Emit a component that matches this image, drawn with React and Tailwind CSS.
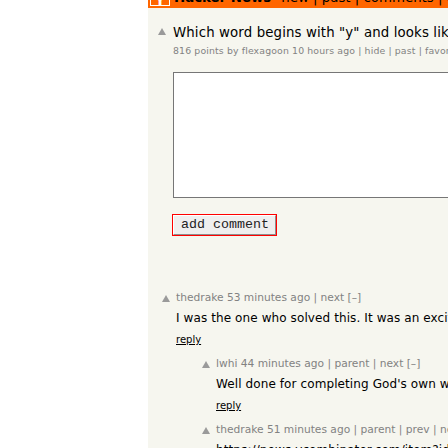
import React from "react";

const Arrow = ({ className }) => (
  <svg width="8" height="7" viewBox="0 0 8 7" className={className}>
    <polygon points="0,7 4,0 8,7" fill="#9a9a9a" />
  </svg>
);

const comments = [
  {
    pad: "pl-[14px]",
    head: "thedrake 53 minutes ago | next [–]",
    text: "I was the one who solved this. It was an exciting moment for me, I had been staring at it for a while.",
  },
  {
    pad: "pl-[54px]",
    head: "lwhi 44 minutes ago | parent | next [–]",
    text: "Well done for completing God's own word search.",
  },
  {
    pad: "pl-[54px]",
    head: "thedrake 51 minutes ago | parent | prev | next [–]",
    text: "https://news.ycombinator.com/item?id=40953458",
  },
];

const App = () => {
  return (
    <div className="w-[448px] h-[448px] overflow-hidden flex bg-white font-['DejaVu_Sans',Verdana,sans-serif]">
      <div className="w-[148px] shrink-0" />

      <div className="w-[1680px] shrink-0 bg-[#f6f6ef]">
        {/* Header (scrolled, only the bottom shows) */}
        <div className="h-[8px] bg-[#ff6600] overflow-hidden flex items-end pl-[2px] pb-[2px] whitespace-nowrap">
          <div className="w-[20px] h-[20px] border border-white flex items-end justify-center shrink-0">
            <span className="text-white font-bold text-[14px] leading-[10px]">Y</span>
          </div>
          <span className="ml-[4px] text-[13.33px] leading-[16px] font-bold text-black">Hacker News</span>
          <span className="ml-[10px] text-[13.33px] leading-[16px] text-black">
            new | past | comments | ask | show | jobs | submit
          </span>
        </div>

        {/* Story */}
        <div className="mt-[17px] flex pl-[10px] whitespace-nowrap">
          <Arrow className="mt-[3px] shrink-0" />
          <span className="ml-[7px] text-[13.33px] leading-[16px] tracking-[0.12px] text-black">
            Which word begins with "y" and looks like an axe in this picture?
          </span>
        </div>
        <div className="mt-[4px] pl-[25px] text-[9.33px] leading-[12px] tracking-[0.14px] text-[#828282] whitespace-nowrap">
          816 points by flexagoon 10 hours ago | hide | past | favorite | 318 comments
        </div>

        {/* Comment form */}
        <div className="mt-[15px] pl-[25px]">
          <textarea
            readOnly
            className="block w-[600px] h-[126px] bg-white border border-[#767676] resize-none outline-none"
          />
        </div>
        <div className="mt-[16px] pl-[24px]">
          <div className="w-[105px] h-[22px] border border-[#ff0000]">
            <button className="w-full h-full flex items-center pl-[7px] bg-[#efefef] border border-t-white border-l-white border-r-[#8f8f8f] border-b-[#8f8f8f] font-['Liberation_Mono',monospace] text-[13.33px] leading-[16px] text-[#222]">
              add comment
            </button>
          </div>
        </div>

        {/* Comments */}
        <div className="mt-[55px]">
          {comments.map((c, i) => (
            <div key={i} className={`flex h-[66px] ${c.pad}`}>
              <Arrow className="mt-[4px] shrink-0" />
              <div className="ml-[6px] whitespace-nowrap">
                <div className="text-[10.67px] leading-[14px] text-[#828282]">{c.head}</div>
                <div className="mt-[6px] text-[12px] leading-[15px] tracking-[0.1px] text-black">{c.text}</div>
                <div className="mt-[7px] text-[10px] leading-[13px]">
                  <span className="underline text-black">reply</span>
                </div>
              </div>
            </div>
          ))}
        </div>
      </div>
    </div>
  );
};

export default App;
